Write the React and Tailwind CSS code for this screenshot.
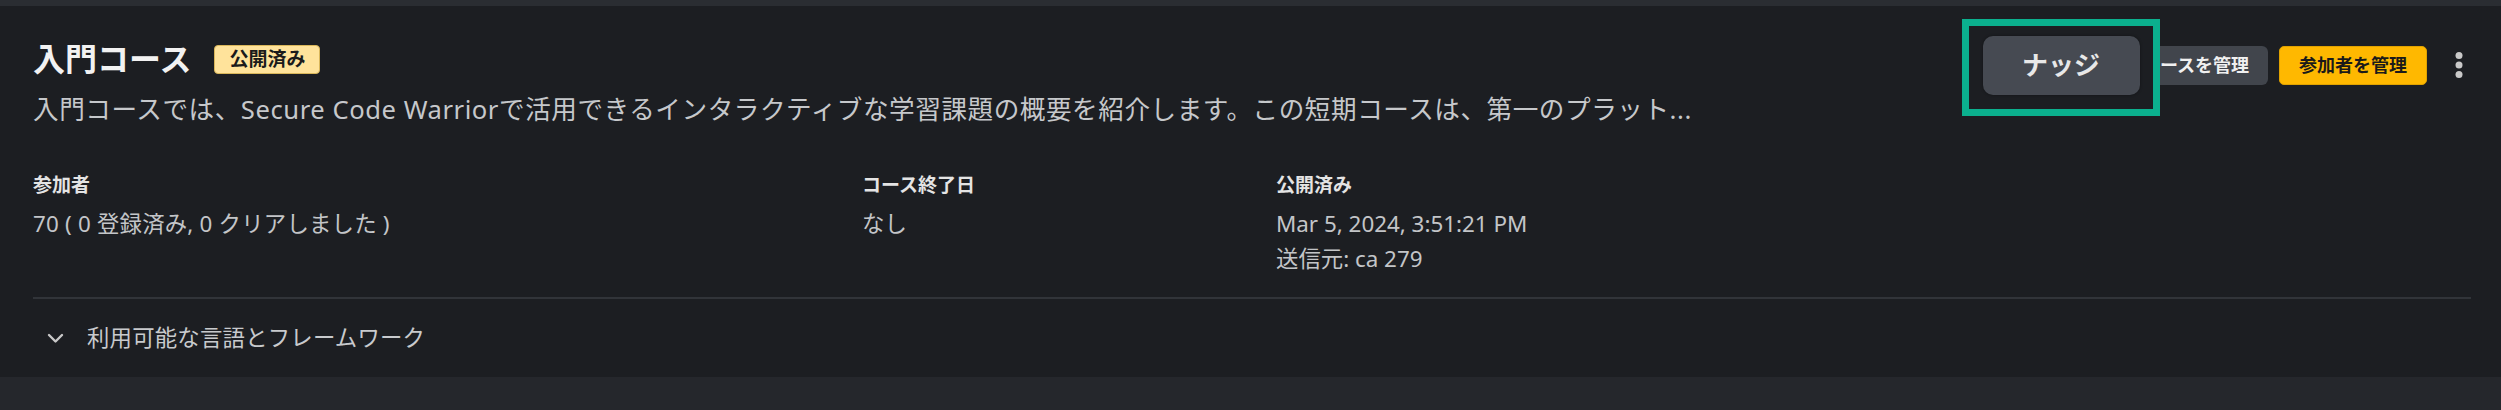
import React from "react";

const FONT = { fontFamily: '"Noto Sans", "Noto Sans CJK JP", sans-serif' };

export default function App() {
  return (
    <div className="w-[2501px] h-[410px] bg-[#25272c] overflow-hidden" style={FONT}>
      <div className="h-[6px] bg-[#2a2d32]" />
      <div className="relative bg-[#1c1e22] pl-[33px] pr-[30px] pt-[33px] pb-[19px]">
        {/* header */}
        <div className="flex items-start justify-between">
          <div className="flex flex-col">
            <div className="flex items-center h-[40px]">
              <h1 className="text-[32px] leading-[40px] font-bold text-[#f2f2f2]">入門コース</h1>
              <span className="ml-[23px] h-[29px] px-[14px] flex items-center rounded-[4px] bg-[#ffe39b] border border-[#d9b65a] text-[19px] font-bold text-[#1b1b1b]">
                公開済み
              </span>
            </div>
            <p className="mt-[12px] text-[25.6px] leading-[38px] tracking-[0.55px] text-[#c6c8cb] whitespace-nowrap">
              入門コースでは、Secure Code Warriorで活用できるインタラクティブな学習課題の概要を紹介します。この短期コースは、第一のプラット...
            </p>
          </div>
          <div className="mt-[7px] flex items-center">
            <button className="h-[39px] px-[19px] rounded-[6px] bg-[#41454c] text-[18px] font-bold text-[#f0f0f0]">
              コースを管理
            </button>
            <button className="ml-[11px] h-[39px] px-[19px] rounded-[5px] bg-[#ffb800] border border-[#e0a200] text-[18px] font-bold text-[#1a1a1a]">
              参加者を管理
            </button>
            <button className="ml-[20px] w-[24px] h-[39px] flex items-center justify-center">
              <svg width="8" height="27" viewBox="0 0 8 27">
                <circle cx="4" cy="3.5" r="3.5" fill="#c9c9c9" />
                <circle cx="4" cy="13" r="3.5" fill="#c9c9c9" />
                <circle cx="4" cy="22.5" r="3.5" fill="#c9c9c9" />
              </svg>
            </button>
          </div>
        </div>

        {/* meta */}
        <div className="mt-[42px] flex">
          <div className="w-[829px]">
            <div className="text-[19px] leading-[28px] font-bold text-[#e4e4e4]">参加者</div>
            <div className="mt-[7px] text-[22.4px] leading-[35px] tracking-[0.2px] text-[#c3c5c8]">70 ( 0 登録済み, 0 クリアしました )</div>
          </div>
          <div className="w-[414px]">
            <div className="text-[19px] leading-[28px] font-bold text-[#e4e4e4]">コース終了日</div>
            <div className="mt-[7px] text-[22.4px] leading-[35px] text-[#c3c5c8]">なし</div>
          </div>
          <div>
            <div className="text-[19px] leading-[28px] font-bold text-[#e4e4e4]">公開済み</div>
            <div className="mt-[7px] text-[22.4px] leading-[35px] text-[#c3c5c8]">Mar 5, 2024, 3:51:21 PM</div>
            <div className="text-[22.4px] leading-[35px] text-[#c3c5c8]">送信元: ca 279</div>
          </div>
        </div>

        <div className="mt-[21px] h-[2px] bg-[#313439]" />

        <div className="mt-[19px] h-[40px] flex items-center">
          <svg className="ml-[14px]" width="17" height="11" viewBox="0 0 17 11">
            <polyline points="2,2 8.5,8.5 15,2" fill="none" stroke="#c8c8c8" strokeWidth="2.4" strokeLinecap="round" strokeLinejoin="round" />
          </svg>
          <span className="ml-[23px] text-[22.4px] tracking-[0.2px] text-[#c8cacd]">利用可能な言語とフレームワーク</span>
        </div>

        {/* nudge highlight overlay */}
        <div className="absolute left-[1962px] top-[13px] w-[198px] h-[97px] border-[7px] border-[#0bb08e] bg-[#1c1e22] flex justify-center pt-[10px]">
          <button className="w-[157px] h-[59px] rounded-[10px] bg-[#464a52] text-[26px] font-bold text-[#e8e8e8] shadow-[0_0_3px_rgba(0,0,0,0.4)]">
            ナッジ
          </button>
        </div>
      </div>
    </div>
  );
}
